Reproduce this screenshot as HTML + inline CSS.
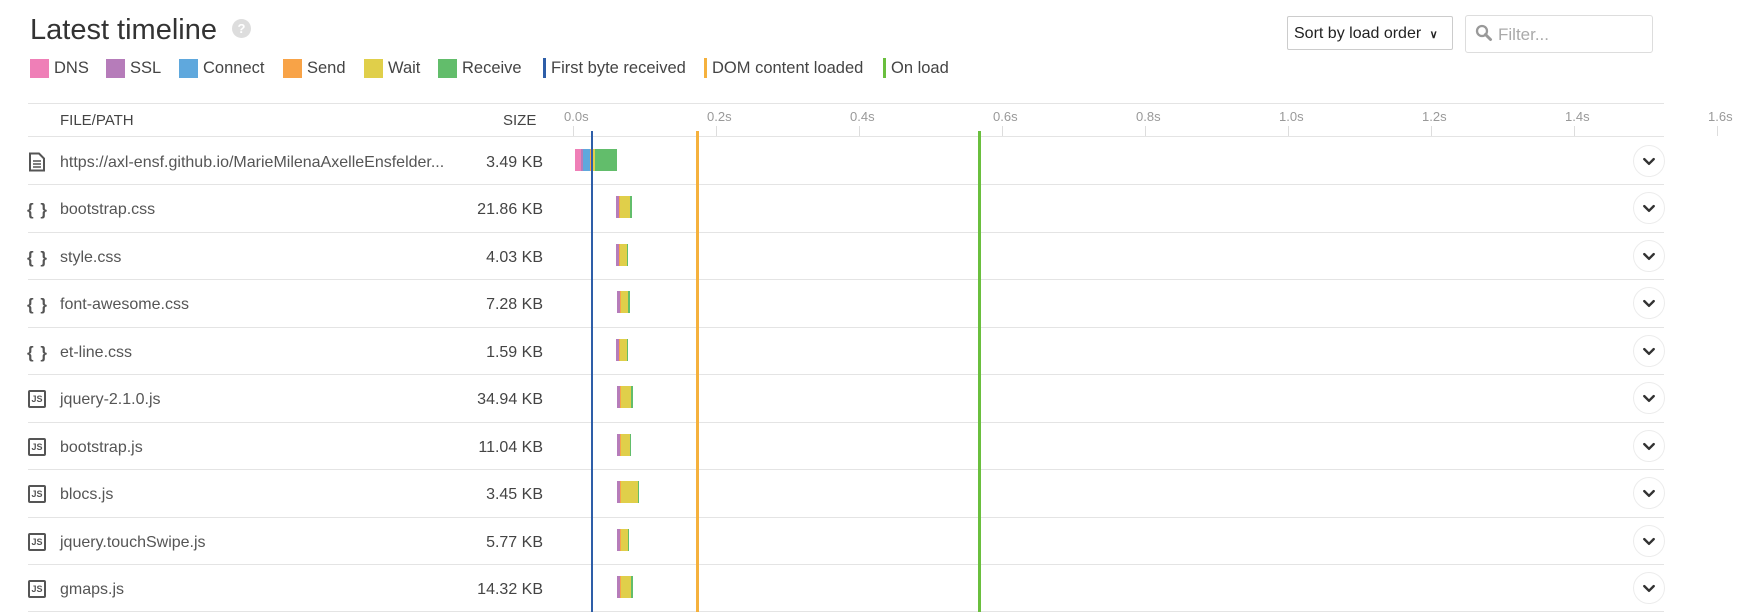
<!DOCTYPE html>
<html><head><meta charset="utf-8"><style>
*{margin:0;padding:0;box-sizing:border-box}
body{width:1746px;height:612px;background:#fff;font-family:"Liberation Sans",Arial,sans-serif;color:#555;position:relative;overflow:hidden}
.a{position:absolute}
.sq{position:absolute;top:59px;width:19px;height:19px}
.lt{position:absolute;top:58px;font-size:16.5px;color:#444;line-height:20px}
.vl{position:absolute;top:58px;width:3px;height:20px}
.hl{position:absolute;left:28px;width:1636px;height:1px;background:#e4e4e4}
.tk{position:absolute;top:109px;font-size:13px;color:#999}
.tm{position:absolute;top:126px;width:1px;height:10px;background:#ddd}
.nm{position:absolute;left:60px;font-size:16px;color:#555;line-height:20px}
.sz{position:absolute;right:1203px;font-size:16px;color:#444;line-height:20px}
.ic{position:absolute;left:27px;font-size:17px;font-weight:bold;color:#555;line-height:20px;letter-spacing:1px}
.js{position:absolute;left:28px;width:18px;height:18px;border:2px solid #555;border-radius:2px;font-size:9px;font-weight:bold;color:#555;text-align:center;line-height:14px}
.cv{position:absolute;left:1633px;width:32px;height:32px;border:1px solid #ececec;border-radius:50%}
.bar{position:absolute;height:22px;display:flex}
.bar i{display:block;height:100%}
</style></head><body>
<div class="a" style="left:30px;top:13px;font-size:29px;color:#333;line-height:34px">Latest timeline</div>
<div class="a" style="left:232px;top:19px;width:19px;height:19px;border-radius:50%;background:#ddd;color:#fff;font-size:13px;font-weight:bold;text-align:center;line-height:19px">?</div>

<div class="sq" style="left:30px;background:#ef7fb7"></div><div class="lt" style="left:54px">DNS</div>
<div class="sq" style="left:106px;background:#b67cba"></div><div class="lt" style="left:130px">SSL</div>
<div class="sq" style="left:179px;background:#5fa8dd"></div><div class="lt" style="left:203px">Connect</div>
<div class="sq" style="left:283px;background:#f8a347"></div><div class="lt" style="left:307px">Send</div>
<div class="sq" style="left:364px;background:#e0cf4a"></div><div class="lt" style="left:388px">Wait</div>
<div class="sq" style="left:438px;background:#62bd6b"></div><div class="lt" style="left:462px">Receive</div>
<div class="vl" style="left:543px;background:#2e5ea8"></div><div class="lt" style="left:551px">First byte received</div>
<div class="vl" style="left:704px;background:#f5b13d"></div><div class="lt" style="left:712px">DOM content loaded</div>
<div class="vl" style="left:883px;background:#6abf3e"></div><div class="lt" style="left:891px">On load</div>

<div class="a" style="left:1287px;top:16px;width:166px;height:34px;border:1px solid #ccc;border-radius:2px;font-size:16px;color:#222;line-height:34px;padding-left:6px">Sort by load order <span style="font-size:11px;font-weight:bold;margin-left:4px">&#8744;</span></div>
<div class="a" style="left:1465px;top:15px;width:188px;height:38px;border:1px solid #ddd;border-radius:3px"></div>
<svg class="a" style="left:1475px;top:24px" width="18" height="18" viewBox="0 0 18 18"><circle cx="7" cy="7" r="5" fill="none" stroke="#999" stroke-width="2.3"/><path d="M10.5 10.5L15.5 15.5" stroke="#999" stroke-width="3" stroke-linecap="round"/></svg>
<div class="a" style="left:1498px;top:25px;font-size:17px;color:#aaa">Filter...</div>

<div class="hl" style="top:103px"></div>
<div class="hl" style="top:136px"></div>
<div class="a" style="left:60px;top:112px;font-size:15px;color:#444">FILE/PATH</div>
<div class="a" style="left:503px;top:112px;font-size:15px;color:#444">SIZE</div>
<div class="tk" style="left:564px">0.0s</div><div class="tm" style="left:573px"></div>
<div class="tk" style="left:707px">0.2s</div><div class="tm" style="left:716px"></div>
<div class="tk" style="left:850px">0.4s</div><div class="tm" style="left:859px"></div>
<div class="tk" style="left:993px">0.6s</div><div class="tm" style="left:1002px"></div>
<div class="tk" style="left:1136px">0.8s</div><div class="tm" style="left:1145px"></div>
<div class="tk" style="left:1279px">1.0s</div><div class="tm" style="left:1288px"></div>
<div class="tk" style="left:1422px">1.2s</div><div class="tm" style="left:1431px"></div>
<div class="tk" style="left:1565px">1.4s</div><div class="tm" style="left:1574px"></div>
<div class="tk" style="left:1708px">1.6s</div><div class="tm" style="left:1717px"></div>

<div class="hl" style="top:184px"></div><div class="hl" style="top:232px"></div><div class="hl" style="top:279px"></div><div class="hl" style="top:327px"></div><div class="hl" style="top:374px"></div><div class="hl" style="top:422px"></div><div class="hl" style="top:469px"></div><div class="hl" style="top:517px"></div><div class="hl" style="top:564px"></div><div class="hl" style="top:611px"></div>

<svg class="a" style="left:28px;top:152px" width="18" height="20" viewBox="0 0 18 20"><path d="M2 1.5h9l5 5v12h-14z" fill="none" stroke="#555" stroke-width="2"/><path d="M5 9h8M5 12h8M5 15h8" stroke="#555" stroke-width="1.6"/></svg>
<div class="nm" style="top:153px">https://axl-ensf.github.io/MarieMilenaAxelleEnsfelder...</div><div class="sz" style="top:153px">3.49 KB</div>

<div class="ic" style="top:200px">{ }</div><div class="nm" style="top:200px">bootstrap.css</div><div class="sz" style="top:200px">21.86 KB</div>
<div class="ic" style="top:248px">{ }</div><div class="nm" style="top:248px">style.css</div><div class="sz" style="top:248px">4.03 KB</div>
<div class="ic" style="top:295px">{ }</div><div class="nm" style="top:295px">font-awesome.css</div><div class="sz" style="top:295px">7.28 KB</div>
<div class="ic" style="top:343px">{ }</div><div class="nm" style="top:343px">et-line.css</div><div class="sz" style="top:343px">1.59 KB</div>
<div class="js" style="top:390px">JS</div><div class="nm" style="top:390px">jquery-2.1.0.js</div><div class="sz" style="top:390px">34.94 KB</div>
<div class="js" style="top:438px">JS</div><div class="nm" style="top:438px">bootstrap.js</div><div class="sz" style="top:438px">11.04 KB</div>
<div class="js" style="top:485px">JS</div><div class="nm" style="top:485px">blocs.js</div><div class="sz" style="top:485px">3.45 KB</div>
<div class="js" style="top:533px">JS</div><div class="nm" style="top:533px">jquery.touchSwipe.js</div><div class="sz" style="top:533px">5.77 KB</div>
<div class="js" style="top:580px">JS</div><div class="nm" style="top:580px">gmaps.js</div><div class="sz" style="top:580px">14.32 KB</div>

<div class="bar" style="left:575px;top:149px"><i style="width:6px;background:#ef7fb7"></i><i style="width:2px;background:#b67cba"></i><i style="width:7px;background:#5fa8dd"></i><i style="width:2px;background:#f8a347"></i><i style="width:3px;background:#e0cf4a"></i><i style="width:22px;background:#62bd6b"></i></div>
<div class="bar" style="left:616px;top:196px"><i style="width:3px;background:#b67cba"></i><i style="width:1px;background:#f8a347"></i><i style="width:10px;background:#e0cf4a"></i><i style="width:2px;background:#62bd6b"></i></div>
<div class="bar" style="left:616px;top:244px"><i style="width:3px;background:#b67cba"></i><i style="width:1px;background:#f8a347"></i><i style="width:7px;background:#e0cf4a"></i><i style="width:1px;background:#62bd6b"></i></div>
<div class="bar" style="left:617px;top:291px"><i style="width:3px;background:#b67cba"></i><i style="width:1px;background:#f8a347"></i><i style="width:7px;background:#e0cf4a"></i><i style="width:2px;background:#62bd6b"></i></div>
<div class="bar" style="left:616px;top:339px"><i style="width:3px;background:#b67cba"></i><i style="width:1px;background:#f8a347"></i><i style="width:7px;background:#e0cf4a"></i><i style="width:1px;background:#62bd6b"></i></div>
<div class="bar" style="left:617px;top:386px"><i style="width:3px;background:#b67cba"></i><i style="width:1px;background:#f8a347"></i><i style="width:10px;background:#e0cf4a"></i><i style="width:2px;background:#62bd6b"></i></div>
<div class="bar" style="left:617px;top:434px"><i style="width:3px;background:#b67cba"></i><i style="width:1px;background:#f8a347"></i><i style="width:9px;background:#e0cf4a"></i><i style="width:1px;background:#62bd6b"></i></div>
<div class="bar" style="left:617px;top:481px"><i style="width:3px;background:#b67cba"></i><i style="width:1px;background:#f8a347"></i><i style="width:17px;background:#e0cf4a"></i><i style="width:1px;background:#62bd6b"></i></div>
<div class="bar" style="left:617px;top:529px"><i style="width:3px;background:#b67cba"></i><i style="width:1px;background:#f8a347"></i><i style="width:7px;background:#e0cf4a"></i><i style="width:1px;background:#62bd6b"></i></div>
<div class="bar" style="left:617px;top:576px"><i style="width:3px;background:#b67cba"></i><i style="width:1px;background:#f8a347"></i><i style="width:10px;background:#e0cf4a"></i><i style="width:2px;background:#62bd6b"></i></div>

<div class="a" style="left:591px;top:131px;width:2px;height:481px;background:#2e5ea8"></div>
<div class="a" style="left:696px;top:131px;width:3px;height:481px;background:#f5b13d"></div>
<div class="a" style="left:978px;top:131px;width:3px;height:481px;background:#6abf3e"></div>

<svg width="0" height="0" style="position:absolute"><defs><symbol id="ch" viewBox="0 0 32 32"><path d="M11 14l5 5 5-5" fill="none" stroke="#333" stroke-width="2.6" stroke-linecap="round" stroke-linejoin="round"/></symbol></defs></svg>
<svg class="cv" style="top:145px"><use href="#ch"/></svg>
<svg class="cv" style="top:192px"><use href="#ch"/></svg>
<svg class="cv" style="top:240px"><use href="#ch"/></svg>
<svg class="cv" style="top:287px"><use href="#ch"/></svg>
<svg class="cv" style="top:335px"><use href="#ch"/></svg>
<svg class="cv" style="top:382px"><use href="#ch"/></svg>
<svg class="cv" style="top:430px"><use href="#ch"/></svg>
<svg class="cv" style="top:477px"><use href="#ch"/></svg>
<svg class="cv" style="top:525px"><use href="#ch"/></svg>
<svg class="cv" style="top:572px"><use href="#ch"/></svg>
</body></html>
